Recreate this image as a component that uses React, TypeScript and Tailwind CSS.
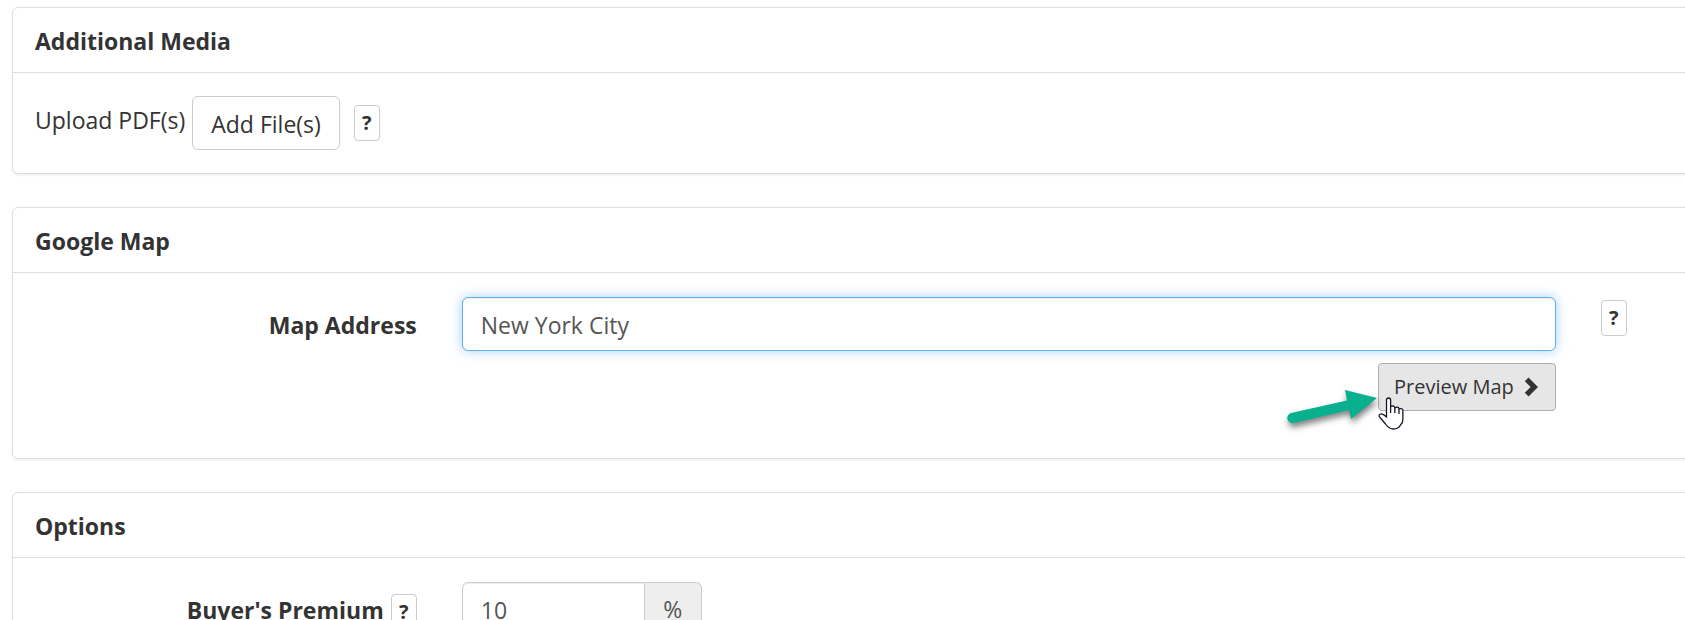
import type { ReactNode } from "react";

function Panel({ title, children }: { title: string; children: ReactNode }) {
    return (
        <section className="rounded-md border border-[#dddddd] bg-white shadow-[0_2px_2px_rgba(0,0,0,0.05)]">
            <h2 className="border-b border-[#dddddd] px-[22px] pt-[17px] pb-[15px] text-[23px] leading-8 font-bold">{title}</h2>
            {children}
        </section>
    );
}

function HelpButton() {
    return (
        <button
            type="button"
            aria-label="Help"
            className="h-9 w-[26px] shrink-0 rounded border border-[#cccccc] bg-white text-center text-xl leading-8 font-bold"
        >
            ?
        </button>
    );
}

function Arrow() {
    return (
        <svg
            className="pointer-events-none absolute top-5 right-full h-12 w-24 drop-shadow-[1px_4px_3px_rgba(0,0,0,0.5)]"
            viewBox="0 0 96 48"
            aria-hidden="true"
        >
            <path d="M9 30 L65 17.5 L63 7 L95 15 L69 36 L67 27 L12 40 A5.2 5.2 0 0 1 9 30 Z" fill="#08b08f" />
        </svg>
    );
}

function HandCursor() {
    return (
        <svg
            className="pointer-events-none absolute top-[34px] left-0 h-[34px] w-[27px]"
            viewBox="0 0 27 34"
            aria-hidden="true"
        >
            <path
                d="M8.5 20 V3.2 Q8.5 1 10.6 1 Q12.6 1 12.6 3.2 V9.5 Q16.5 8 16.8 11 Q20.8 9 21 12 Q24.9 10.5 24.9 14 V22 Q24.9 26 22.5 28 Q20.5 32 15.5 32 Q11 32 7.5 27 L2 20.5 Q0 18.5 2 17.3 Q4 16 8.5 20 Z"
                fill="#fff"
                stroke="#17192b"
                strokeWidth="1.3"
                strokeLinejoin="round"
            />
            <path d="M12.6 9 V16 M16.8 11 V16 M21 12 V17" stroke="#17192b" strokeWidth="1.3" fill="none" />
        </svg>
    );
}

export default function App() {
    return (
        <div className="min-h-screen overflow-hidden bg-white pl-3 font-['Open_Sans','Noto_Sans',sans-serif] text-[#333333]">
            {/* panels run off the right edge of the window */}
            <main className="-mr-9 flex flex-col gap-[33px] pt-[7px]">
                <Panel title="Additional Media">
                    <div className="flex items-start px-[22px] py-[23px]">
                        <label htmlFor="add-files" className="mr-[7px] text-[23px] leading-[48px]">Upload PDF(s)</label>
                        <button id="add-files" type="button" className="mr-3.5 h-[54px] rounded-md border border-[#cccccc] bg-white px-[18px] pt-0.5 text-[23px] leading-8">
                            Add File(s)
                        </button>
                        <div className="flex h-[54px] items-center">
                            <HelpButton />
                        </div>
                    </div>
                </Panel>

                <Panel title="Google Map">
                    <div className="grid grid-cols-12 pt-6 pb-[47px]">
                        <label htmlFor="map-address" className="col-span-3 pr-[23px] text-right text-[23px] leading-[56px] font-bold">
                            Map Address
                        </label>
                        <div className="col-span-8 px-[22px]">
                            <input
                                id="map-address"
                                type="text"
                                defaultValue="New York City"
                                className="block h-[54px] w-full rounded-md border border-[#66afe9] bg-white px-[18px] pt-0.5 text-[23px] text-[#555555] shadow-[inset_0_1px_1px_rgba(0,0,0,0.075),0_0_12px_rgba(102,175,233,0.6)] outline-none"
                            />
                            <div className="mt-3 flex justify-end">
                                <div className="relative">
                                    <button type="button" className="flex h-12 items-center rounded border border-[#adadad] bg-[#e6e6e6] pr-[17px] pl-[15px] text-xl">
                                        Preview Map
                                        <svg className="ml-2.5 h-5 w-[14px]" viewBox="0 0 14 20" aria-hidden="true">
                                            <path d="M4.5 0.5 L14 10 L4.5 19.5 L0.8 15.8 L6.6 10 L0.8 4.2 Z" fill="#333" />
                                        </svg>
                                    </button>
                                    <Arrow />
                                    <HandCursor />
                                </div>
                            </div>
                        </div>
                        <div className="px-[23px] pt-[3px]">
                            <HelpButton />
                        </div>
                    </div>
                </Panel>

                <Panel title="Options">
                    <div className="grid grid-cols-12 py-6">
                        <div className="col-span-3 flex items-start justify-end gap-[7px] pr-[23px]">
                            <label htmlFor="premium" className="text-[23px] leading-[56px] font-bold">Buyer's Premium</label>
                            <div className="pt-3">
                                <HelpButton />
                            </div>
                        </div>
                        <div className="col-span-8 flex px-[22px]">
                            <input
                                id="premium"
                                type="text"
                                defaultValue="10"
                                className="h-[54px] w-[183px] rounded-l-md border border-[#cccccc] bg-white px-[18px] pt-0.5 text-[23px] text-[#555555] shadow-[inset_0_1px_1px_rgba(0,0,0,0.075)] outline-none"
                            />
                            <span className="flex h-[54px] w-[57px] items-center justify-center rounded-r-md border border-l-0 border-[#cccccc] bg-[#eeeeee] text-[23px] text-[#555555]">
                                %
                            </span>
                        </div>
                    </div>
                </Panel>
            </main>
        </div>
    );
}
